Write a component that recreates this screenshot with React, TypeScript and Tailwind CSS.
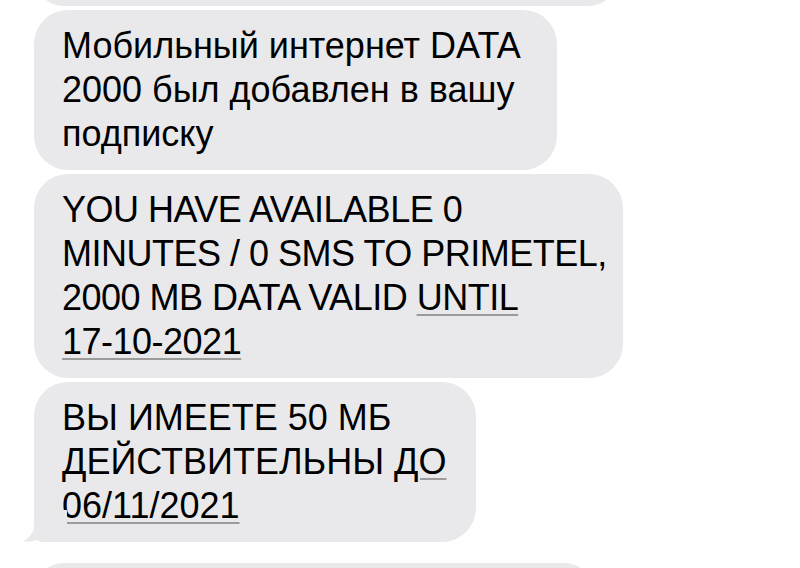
import React from "react";

const bubble =
  "relative shrink-0 whitespace-nowrap rounded-[34px] bg-[#e9e9eb] px-[28px] py-[14px] text-[36px] leading-[44px] text-black";

const link =
  "underline decoration-[#9b9b9b] decoration-2 underline-offset-[4px]";

const Tail = () => (
  <svg
    className="absolute left-[-11px] bottom-0 w-[44px] h-[32px]"
    viewBox="0 0 44 32"
    fill="#e9e9eb"
  >
    <path d="M11 0 L11 15 C11 23 6 28 0 31.5 C7 32.3 14 30.5 19 27.5 C24 30.5 30 32 44 32 L44 0 Z" />
  </svg>
);

export default function App() {
  return (
    <div
      className="w-[800px] h-[568px] overflow-hidden bg-white"
      style={{ fontFamily: '"Liberation Sans", Arial, sans-serif' }}
    >
      <div className="flex flex-col items-start gap-[4px] pl-[34px]">
        {/* previous message, mostly scrolled away */}
        <div className="shrink-0 h-[60px] w-[584px] -mt-[54px] rounded-[34px] bg-[#e9e9eb]" />

        <div className={`${bubble} w-[523px]`}>
          Мобильный интернет DATA
          <br />
          2000 был добавлен в вашу
          <br />
          подписку
        </div>

        <div className={`${bubble} w-[589px] tracking-[-0.5px]`}>
          YOU HAVE AVAILABLE 0
          <br />
          MINUTES / 0 SMS TO PRIMETEL,
          <br />
          2000 MB DATA VALID <span className={link}>UNTIL</span>
          <br />
          <span className={link}>17-10-2021</span>
        </div>

        <div className={`${bubble} w-[442px] rounded-bl-[8px]`}>
          ВЫ ИМЕЕТЕ 50 МБ
          <br />
          ДЕЙСТВИТЕЛЬНЫ <span className={link}>ДО</span>
          <br />
          <span className={link}>06/11/2021</span>
          <Tail />
        </div>

        {/* next message, only its top edge is on screen */}
        <div className="shrink-0 h-[60px] w-[560px] mt-[17px] rounded-[34px] bg-[#e9e9eb]" />
      </div>
    </div>
  );
}
